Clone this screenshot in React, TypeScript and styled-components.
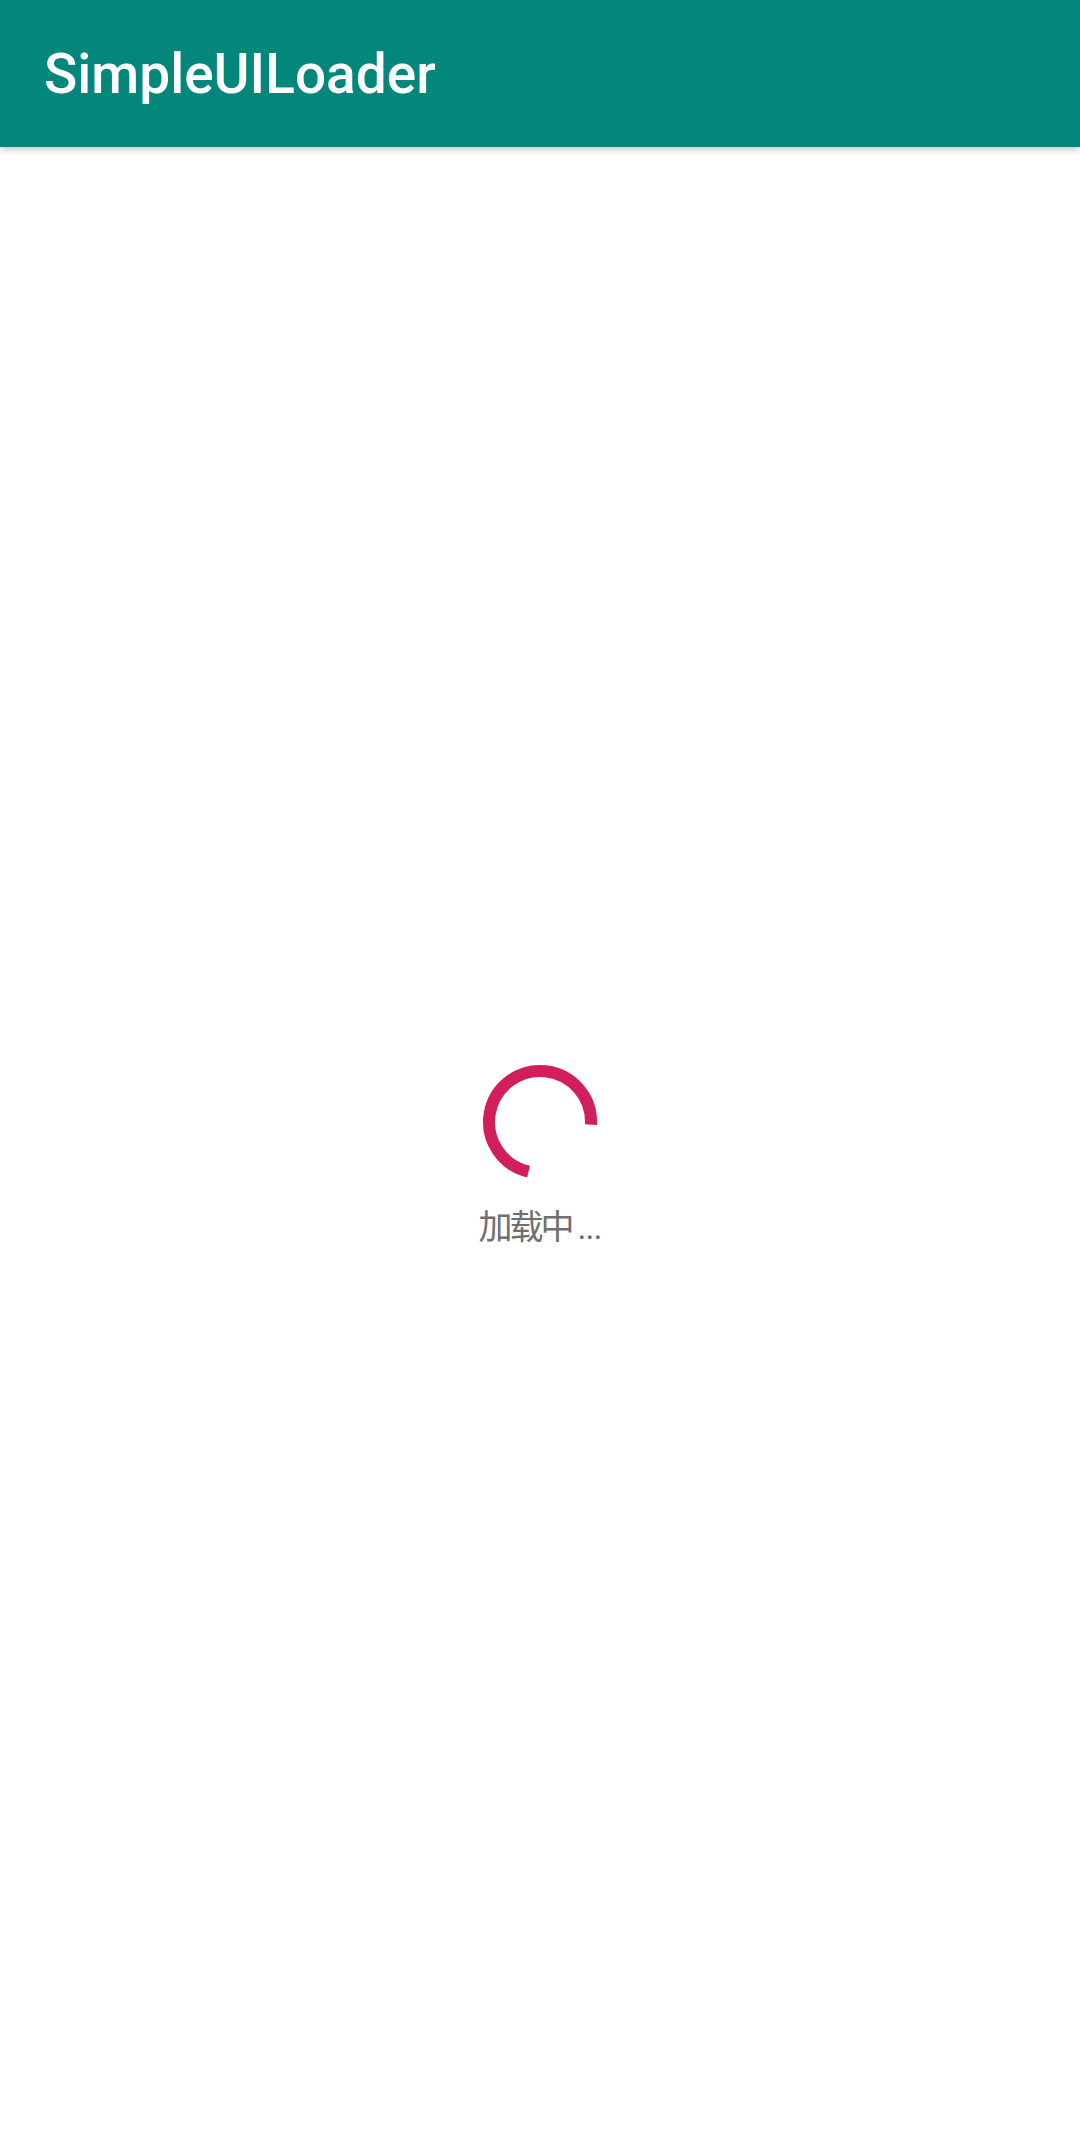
import React from "react";
import styled, { createGlobalStyle } from "styled-components";

const Global = createGlobalStyle`
  html, body { margin: 0; padding: 0; background: #ffffff; }
  body { font-family: Roboto, "Noto Sans", "Noto Sans CJK SC", sans-serif; }
  #root { min-height: 100vh; }
`;

const Page = styled.div`
  display: flex;
  flex-direction: column;
  height: 2152px;
  background: #ffffff;
`;

const Toolbar = styled.header`
  height: 147px;
  flex: 0 0 auto;
  background: #02877a;
  display: flex;
  align-items: center;
  padding: 0 0 0 44px;
  box-shadow: 0 2px 6px rgba(0, 0, 0, 0.18), 0 4px 12px rgba(0, 0, 0, 0.06);
  position: relative;
  z-index: 1;
`;

const Title = styled.h1`
  margin: 0;
  font-family: Roboto, sans-serif;
  font-weight: 500;
  font-size: 55px;
  color: #ffffff;
  letter-spacing: 0;
`;

const Content = styled.main`
  flex: 1 1 auto;
  display: flex;
  flex-direction: column;
  align-items: center;
  justify-content: center;
  gap: 22px;
`;

const Spinner = styled.svg`
  width: 132px;
  height: 132px;
  display: block;
`;

const Label = styled.div`
  font-family: Roboto, "Noto Sans CJK SC", sans-serif;
  font-size: 34px;
  color: #6f6f6f;
  line-height: 1;
  display: flex;
  align-items: baseline;
`;

const Hanzi = styled.span`
  letter-spacing: -3px;
`;

const Dots = styled.span`
  letter-spacing: -1px;
  margin-left: 6px;
`;

function arcPath(cx: number, cy: number, r: number, startDeg: number, endDeg: number) {
  const toRad = (d: number) => (d * Math.PI) / 180;
  const x1 = cx + r * Math.cos(toRad(startDeg));
  const y1 = cy + r * Math.sin(toRad(startDeg));
  const x2 = cx + r * Math.cos(toRad(endDeg));
  const y2 = cy + r * Math.sin(toRad(endDeg));
  const large = Math.abs(endDeg - startDeg) > 180 ? 1 : 0;
  return `M ${x1} ${y1} A ${r} ${r} 0 ${large} 0 ${x2} ${y2}`;
}

export default function App() {
  return (
    <Page>
      <Global />
      <Toolbar>
        <Title>SimpleUILoader</Title>
      </Toolbar>
      <Content>
        <Spinner viewBox="0 0 132 132">
          <path
            d={arcPath(66, 66, 51, 3, -257)}
            fill="none"
            stroke="#d11f5e"
            strokeWidth={12}
            strokeLinecap="butt"
          />
        </Spinner>
        <Label>
          <Hanzi>加载中</Hanzi>
          <Dots>...</Dots>
        </Label>
      </Content>
    </Page>
  );
}
